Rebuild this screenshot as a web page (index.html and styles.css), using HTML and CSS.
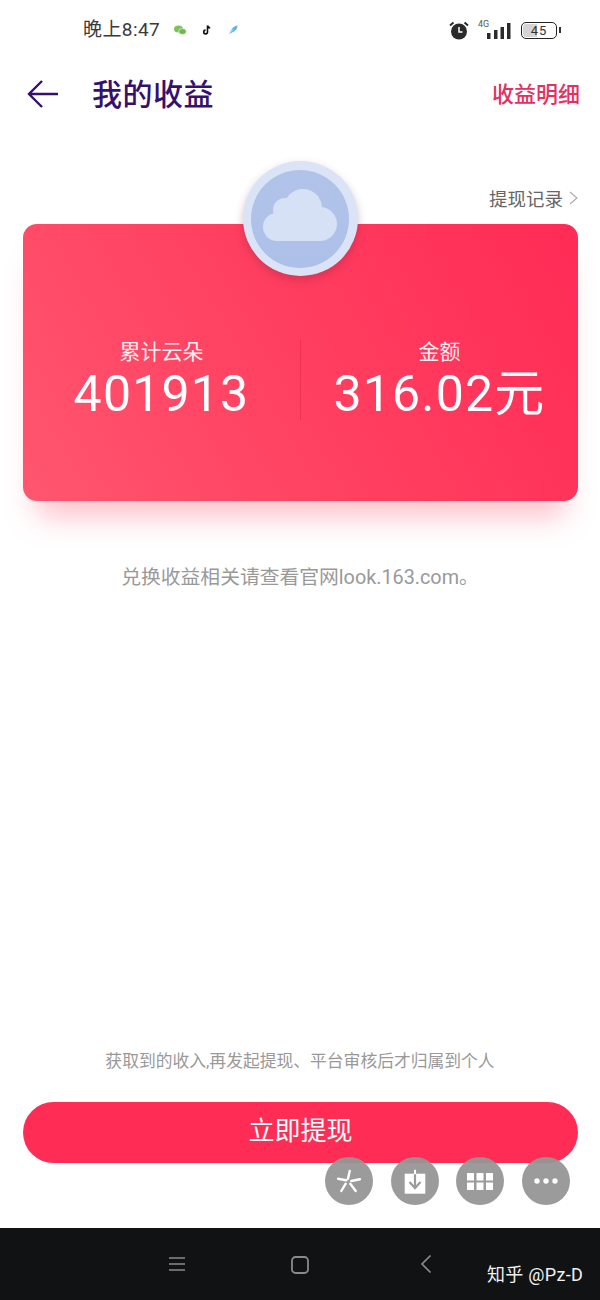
FILE: index.html
```html
<!DOCTYPE html>
<html lang="zh-CN">
<head>
<meta charset="utf-8">
<title>我的收益</title>
<link rel="stylesheet" href="styles.css">
</head>
<body>
<div class="page">
  <div class="status">
    <div class="status-left">
      <span class="time">晚上8:47</span>
      <svg class="notif" width="14" height="12" viewBox="0 0 14 12"><ellipse cx="5.500" cy="5" rx="4.500" ry="3.600" fill="#7cc25a"/><ellipse cx="9.500" cy="7.500" rx="3.800" ry="3" fill="#6fb84e" stroke="#fff" stroke-width=".6"/></svg>
      <svg class="notif tiktok" width="10" height="12" viewBox="0 0 10 12"><path d="M5.500 1.500V8a1.900 1.900 0 1 1-1.900-1.900M5.500 1.500c.3 1.500 1.300 2.300 2.700 2.400" fill="none" stroke="#111" stroke-width="1.600"/></svg>
      <svg class="notif feather" width="12" height="12" viewBox="0 0 12 12"><path d="M1.500 10.500 4 6.500C5 4 7.500 1.800 10.500 1.500 10.500 4.500 8.500 7 6 8z" fill="#5cb5ea"/><path d="M1.500 10.500 6 5.500" stroke="#fff" stroke-width=".6"/></svg>
    </div>
    <div class="status-right">
      <svg width="20" height="19" viewBox="0 0 20 19"><circle cx="10" cy="10.500" r="8" fill="#2b2b2b"/><path d="M10 6v5h3.500" fill="none" stroke="#fff" stroke-width="1.500"/><path d="M1 4.500 4.500 1.500M19 4.500 15.500 1.500" stroke="#2b2b2b" stroke-width="2"/></svg>
      <div class="signal">
        <span class="net">4G</span>
        <svg width="24" height="16" viewBox="0 0 24 16"><rect x="0" y="10" width="3.500" height="6" fill="#2b2b2b"/><rect x="7" y="7" width="3.500" height="9" fill="#2b2b2b"/><rect x="13.500" y="4" width="3.500" height="12" fill="#2b2b2b"/><rect x="20" y="0" width="3.500" height="16" fill="#2b2b2b"/></svg>
      </div>
      <div class="battery"><span class="battery-fill"></span><span class="battery-num">45</span><span class="battery-cap"></span></div>
    </div>
  </div>

  <header class="nav">
    <svg class="back" width="32" height="30" viewBox="0 0 32 30"><path d="M31 15H2M15 2 2 15l13 13" fill="none" stroke="#36106e" stroke-width="2.400"/></svg>
    <h1 class="title">我的收益</h1>
    <a class="detail">收益明细</a>
  </header>

  <div class="records-row">
    <span class="records">提现记录</span>
    <svg width="9" height="14" viewBox="0 0 9 14"><path d="M1 1l7 6-7 6" fill="none" stroke="#aaa" stroke-width="1.100"/></svg>
  </div>

  <section class="card">
    <div class="coin">
      <div class="coin-inner">
        <svg class="cloud" width="74" height="52" viewBox="0 0 74 52"><g fill="#d7e1f5"><circle cx="40" cy="19" r="19"/><circle cx="22" cy="21" r="12"/><circle cx="14" cy="38" r="14"/><circle cx="57" cy="35" r="17"/><rect x="14" y="24" width="43" height="28"/></g></svg>
      </div>
    </div>
    <div class="stat">
      <div class="stat-label">累计云朵</div>
      <div class="stat-value">401913</div>
    </div>
    <div class="divider"></div>
    <div class="stat">
      <div class="stat-label">金额</div>
      <div class="stat-value">316.02元</div>
    </div>
  </section>

  <p class="hint">兑换收益相关请查看官网look.163.com。</p>

  <div class="spacer"></div>

  <p class="notice">获取到的收入,再发起提现、平台审核后才归属到个人</p>
  <button class="cta"><span class="cta-text">立即提现</span></button>

  <div class="floats">
    <div class="fab"><svg width="24" height="24" viewBox="0 0 24 24"><path d="M12.700 2 11 9.700M1 9.700l8.300 1.600M23 10.300 14.300 12M4.300 22l4.400-7.300M18.700 22l-5.400-7.300" fill="none" stroke="#fff" stroke-width="2.400" stroke-linecap="round"/></svg></div>
    <div class="fab"><svg width="24" height="28" viewBox="0 0 24 28"><rect x="1.700" y="6.700" width="20.600" height="20" fill="#fff"/><path d="M12 6.700V21M6.500 15l5.500 6 5.500-6" fill="none" stroke="#9b9b9b" stroke-width="2.200"/><path d="M12 2.700v4.500" stroke="#fff" stroke-width="2"/></svg></div>
    <div class="fab"><svg width="26" height="17" viewBox="0 0 26 17"><g fill="#fff"><rect width="7" height="7.500"/><rect x="9.500" width="7" height="7.500"/><rect x="19" width="7" height="7.500"/><rect y="9.500" width="7" height="7.500"/><rect x="9.500" y="9.500" width="7" height="7.500"/><rect x="19" y="9.500" width="7" height="7.500"/></g></svg></div>
    <div class="fab"><svg width="24" height="6" viewBox="0 0 24 6"><g fill="#fff"><circle cx="3" cy="3" r="2.700"/><circle cx="12" cy="3" r="2.700"/><circle cx="21" cy="3" r="2.700"/></g></svg></div>
  </div>

  <footer class="sysbar">
    <svg class="sys-menu" width="18" height="16" viewBox="0 0 18 16"><path d="M1 2h16M1 8h16M1 14h16" stroke="#8a8a8a" stroke-width="1.600"/></svg>
    <svg class="sys-home" width="18" height="18" viewBox="0 0 18 18"><rect x="1" y="1" width="16" height="16" rx="3.500" fill="none" stroke="#8a8a8a" stroke-width="1.800"/></svg>
    <svg class="sys-back" width="12" height="20" viewBox="0 0 12 20"><path d="M10.500 1.500 2 10l8.500 8.500" fill="none" stroke="#8a8a8a" stroke-width="1.700"/></svg>
    <span class="mark">知乎 @Pz-D</span>
  </footer>
</div>
</body>
</html>
```
FILE: styles.css
```css
* { box-sizing: border-box; }
html, body { margin: 0; padding: 0; background: #fff; }
body { font-family: Roboto, "Noto Sans CJK SC", sans-serif; }
.page {
  position: relative;
  width: 600px;
  height: 1300px;
  display: flex;
  flex-direction: column;
  overflow: hidden;
  background: #fff;
}
.status {
  height: 60px;
  display: flex;
  justify-content: space-between;
  align-items: center;
  padding: 0 43px 0 83px;
}
.status-left { display: flex; align-items: center; }
.time { font-size: 19px; line-height: 22px; color: #3a3a3a; width: 90px; letter-spacing: .4px; }
.notif { display: block; }
.tiktok { margin-left: 15px; }
.feather { margin-left: 15px; }
.status-right { display: flex; align-items: center; }
.signal { position: relative; width: 24px; height: 16px; margin: 1px 0 0 18px; }
.signal svg { display: block; }
.net { position: absolute; left: -9px; top: -4px; font-size: 9px; line-height: 10px; color: #555; }
.battery {
  position: relative;
  width: 36px;
  height: 17px;
  margin-left: 10px;
  border: 1.500px solid #222;
  border-radius: 5px;
  display: flex;
  align-items: center;
  justify-content: center;
}
.battery-fill { position: absolute; left: 1px; top: 1px; bottom: 1px; width: 14px; background: #d4d4d4; border-radius: 3px 0 0 3px; }
.battery-num { position: relative; font-size: 13px; letter-spacing: 1px; color: #333; }
.battery-cap { position: absolute; right: -5px; top: 4px; width: 2px; height: 6px; background: #333; }

.nav {
  height: 68px;
  display: flex;
  align-items: center;
  padding: 0 20px 0 27px;
}
.back { display: block; }
.title { margin: 1px 0 0 33px; font-size: 30px; font-weight: 500; color: #36106e; line-height: 40px; letter-spacing: .5px; }
.detail { margin: 0 0 4px auto; font-size: 22px; font-weight: 500; color: #e5305f; }

.records-row {
  height: 40px;
  margin-top: 50px;
  padding: 0 22px 0 0;
  display: flex;
  justify-content: flex-end;
  align-items: center;
  gap: 6px;
}
.records { font-size: 18.500px; color: #666; }

.card {
  position: relative;
  margin: 6px 22px 0 23px;
  height: 277px;
  border-radius: 14px;
  background: linear-gradient(240deg, #ff2b56 0%, #ff3f60 50%, #ff566f 100%);
  box-shadow: 0 28px 28px -14px rgba(255, 70, 100, .36);
  display: flex;
  align-items: center;
  padding-top: 35px;
}
.coin {
  position: absolute;
  left: 219.500px;
  top: -63px;
  width: 115px;
  height: 115px;
  border-radius: 50%;
  background: #dbe4f6;
  box-shadow: 0 4px 8px rgba(120, 40, 70, .3);
  display: flex;
  align-items: center;
  justify-content: center;
}
.coin-inner {
  width: 98px;
  height: 98px;
  border-radius: 50%;
  background: linear-gradient(#b2c3e8, #adc0e8);
  display: flex;
  align-items: center;
  justify-content: center;
}
.cloud { display: block; margin-bottom: 8px; }
.stat { flex: 1; text-align: center; color: #fff; }
.stat-label { font-size: 21px; line-height: 26px; opacity: .92; }
.stat-value { font-size: 50px; line-height: 54px; margin-top: 2px; letter-spacing: 1.200px; }
.divider { width: 1px; height: 80px; background: rgba(210, 30, 70, .4); }

.hint { margin: 63px 0 0; text-align: center; font-size: 19.800px; line-height: 28px; color: #999; }
.spacer { flex: 1; }
.notice { margin: 0; text-align: center; font-size: 16.800px; line-height: 24px; color: #999; }
.cta {
  margin: 29px 22px 0 23px;
  height: 61px;
  padding: 0 0 4px;
  border: 0;
  border-radius: 31px;
  background: #ff2d55;
  color: #fff;
  font: 400 26px Roboto, "Noto Sans CJK SC", sans-serif;
}
.cta-text { display: block; margin-top: -4px; }
.floats {
  position: absolute;
  left: 325px;
  top: 1157px;
  display: flex;
  gap: 17.700px;
}
.fab {
  width: 48px;
  height: 48px;
  border-radius: 50%;
  background: rgba(150, 150, 150, .95);
  display: flex;
  align-items: center;
  justify-content: center;
}
.fab svg { display: block; }
.sysbar {
  position: relative;
  margin-top: 65px;
  height: 72px;
  background: #111214;
}
.sysbar svg { position: absolute; top: 28px; display: block; }
.sys-menu { left: 168px; }
.sys-home { left: 291px; }
.sys-back { left: 420px; top: 26px !important; }
.mark { position: absolute; left: 487px; top: 35px; font-size: 18px; line-height: 24px; color: #f0f0f0; letter-spacing: .3px; }
```
